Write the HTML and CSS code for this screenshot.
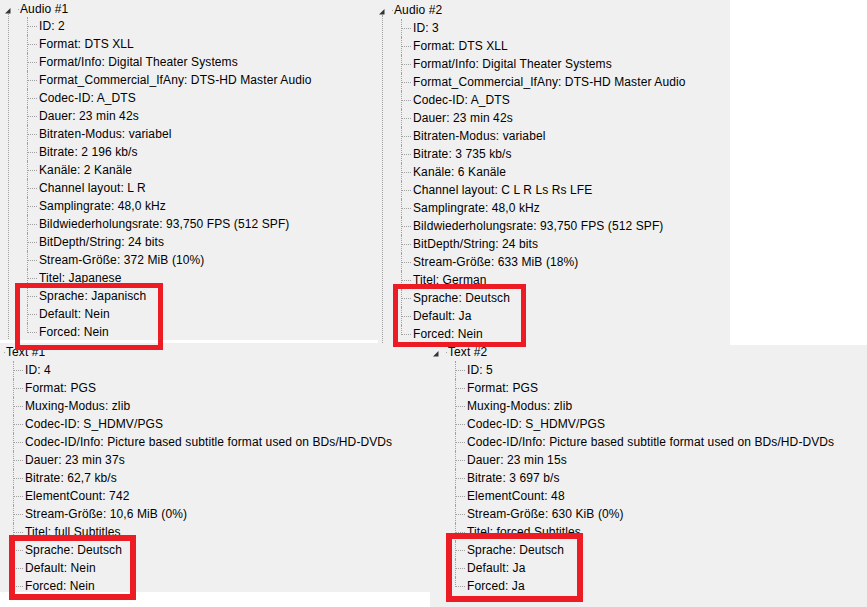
FILE: index.html
```html
<!DOCTYPE html>
<html lang="de">
<head>
    <meta charset="UTF-8">
    <meta name="viewport" content="width=device-width, initial-scale=1.0">
    <title>MediaInfo Baumansicht</title>

    <link rel="stylesheet" href="styles.css">
</head>
<body>
    <!-- Audio #1 -->
    <div class="shot shot-audio1">
        <div class="node">
            <div class="node-head">
                <svg class="expander" width="6" height="6" viewBox="0 0 6 6"><polygon points="5.5,0 5.5,5.5 0,5.5" fill="#333"/></svg>
                <span class="stub"></span>
                <span class="label">Audio #1</span>
            </div>
            <ul class="children">
                <li>ID: 2</li>
                <li>Format: DTS XLL</li>
                <li>Format/Info: Digital Theater Systems</li>
                <li>Format_Commercial_IfAny: DTS-HD Master Audio</li>
                <li>Codec-ID: A_DTS</li>
                <li>Dauer: 23 min 42s</li>
                <li>Bitraten-Modus: variabel</li>
                <li>Bitrate: 2 196 kb/s</li>
                <li>Kanäle: 2 Kanäle</li>
                <li>Channel layout: L R</li>
                <li>Samplingrate: 48,0 kHz</li>
                <li>Bildwiederholungsrate: 93,750 FPS (512 SPF)</li>
                <li>BitDepth/String: 24 bits</li>
                <li>Stream-Größe: 372 MiB (10%)</li>
                <li>Titel: Japanese</li>
                <li>Sprache: Japanisch</li>
                <li>Default: Nein</li>
                <li>Forced: Nein</li>
            </ul>
        </div>
    </div>

    <!-- Audio #2 -->
    <div class="shot shot-audio2">
        <div class="node">
            <div class="node-head">
                <svg class="expander" width="6" height="6" viewBox="0 0 6 6"><polygon points="5.5,0 5.5,5.5 0,5.5" fill="#333"/></svg>
                <span class="stub"></span>
                <span class="label">Audio #2</span>
            </div>
            <ul class="children">
                <li>ID: 3</li>
                <li>Format: DTS XLL</li>
                <li>Format/Info: Digital Theater Systems</li>
                <li>Format_Commercial_IfAny: DTS-HD Master Audio</li>
                <li>Codec-ID: A_DTS</li>
                <li>Dauer: 23 min 42s</li>
                <li>Bitraten-Modus: variabel</li>
                <li>Bitrate: 3 735 kb/s</li>
                <li>Kanäle: 6 Kanäle</li>
                <li>Channel layout: C L R Ls Rs LFE</li>
                <li>Samplingrate: 48,0 kHz</li>
                <li>Bildwiederholungsrate: 93,750 FPS (512 SPF)</li>
                <li>BitDepth/String: 24 bits</li>
                <li>Stream-Größe: 633 MiB (18%)</li>
                <li>Titel: German</li>
                <li>Sprache: Deutsch</li>
                <li>Default: Ja</li>
                <li>Forced: Nein</li>
            </ul>
        </div>
    </div>

    <!-- Text #1 -->
    <div class="shot shot-text1">
        <div class="node">
            <div class="node-head">
                <svg class="expander" width="6" height="6" viewBox="0 0 6 6"><polygon points="5.5,0 5.5,5.5 0,5.5" fill="#333"/></svg>
                <span class="stub"></span>
                <span class="label">Text #1</span>
            </div>
            <ul class="children">
                <li>ID: 4</li>
                <li>Format: PGS</li>
                <li>Muxing-Modus: zlib</li>
                <li>Codec-ID: S_HDMV/PGS</li>
                <li>Codec-ID/Info: Picture based subtitle format used on BDs/HD-DVDs</li>
                <li>Dauer: 23 min 37s</li>
                <li>Bitrate: 62,7 kb/s</li>
                <li>ElementCount: 742</li>
                <li>Stream-Größe: 10,6 MiB (0%)</li>
                <li>Titel: full Subtitles</li>
                <li>Sprache: Deutsch</li>
                <li>Default: Nein</li>
                <li>Forced: Nein</li>
            </ul>
        </div>
    </div>

    <!-- Text #2 -->
    <div class="shot shot-text2">
        <div class="node last">
            <div class="node-head">
                <svg class="expander" width="6" height="6" viewBox="0 0 6 6"><polygon points="5.5,0 5.5,5.5 0,5.5" fill="#333"/></svg>
                <span class="stub"></span>
                <span class="label">Text #2</span>
            </div>
            <ul class="children">
                <li>ID: 5</li>
                <li>Format: PGS</li>
                <li>Muxing-Modus: zlib</li>
                <li>Codec-ID: S_HDMV/PGS</li>
                <li>Codec-ID/Info: Picture based subtitle format used on BDs/HD-DVDs</li>
                <li>Dauer: 23 min 15s</li>
                <li>Bitrate: 3 697 b/s</li>
                <li>ElementCount: 48</li>
                <li>Stream-Größe: 630 KiB (0%)</li>
                <li>Titel: forced Subtitles</li>
                <li>Sprache: Deutsch</li>
                <li>Default: Ja</li>
                <li>Forced: Ja</li>
            </ul>
        </div>
    </div>

    <!-- red markings drawn over the screenshots -->
    <div class="mark mark-1"></div>
    <div class="mark mark-2"></div>
    <div class="mark mark-3"></div>
    <div class="mark mark-4"></div>
</body>
</html>
```

FILE: styles.css
```css
body{
    margin: 0;
    background-color: #fff;
    color: #000;
    font-family: "Liberation Sans", Arial, sans-serif;
    font-size: 12px;
    letter-spacing: 0.1px;
}

/* each screenshot crop */
.shot{
    position: absolute;
    background-color: #f0f0f0;
    overflow: hidden;
    box-sizing: border-box;
}
.shot-audio1{
    left: 0;
    top: 0;
    width: 378px;
    height: 340px;
    --x: 8px;
    --head: 17px;
}
.shot-audio1 .node-head{
    padding-top: 1px;
}
.shot-audio2{
    left: 378px;
    top: 0;
    width: 352px;
    height: 345px;
    padding-top: 1px;
    --x: 4px;
    --head: 18px;
}
.shot-text1{
    left: 0;
    top: 343px;
    width: 430px;
    height: 249px;
    --x: -6px;
    --head: 18px;
}
.shot-text2{
    left: 430px;
    top: 345px;
    width: 437px;
    height: 262px;
    --x: 6px;
    --head: 18px;
}
.shot-text2 .node{
    margin-top: -2px;
}

/* tree */
.node{
    position: relative;
}
.node::before{
    content: "";
    position: absolute;
    left: var(--x);
    top: 14px;
    bottom: 0;
    border-left: 1px dotted #a0a0a0;
}
.node.last::before{
    display: none;
}
.node-head{
    display: flex;
    align-items: center;
    box-sizing: border-box;
    height: var(--head);
    line-height: var(--head);
    margin-left: calc(var(--x) - 3px);
    white-space: nowrap;
}
.expander{
    display: block;
    flex: none;
    margin-top: 3px;
}
.stub{
    flex: none;
    width: 1px;
    height: 1px;
    background-color: #a0a0a0;
    margin: 0 1px 0 7px;
}
.children{
    list-style: none;
    margin: 0 0 0 calc(var(--x) + 19px);
    padding: 0;
}
.children li{
    position: relative;
    height: 18px;
    line-height: 18px;
    padding-left: 12px;
    white-space: nowrap;
}
.children li::before{
    content: "";
    position: absolute;
    left: 1px;
    top: 9px;
    width: 9px;
    border-top: 1px dotted #a0a0a0;
}
.children li::after{
    content: "";
    position: absolute;
    left: 0;
    top: 0;
    bottom: 0;
    border-left: 1px dotted #a0a0a0;
}
.children li:last-child::after{
    bottom: auto;
    height: 10px;
}

/* red highlight boxes */
.mark{
    position: absolute;
    border: 5px solid #ed1c24;
    box-sizing: border-box;
}
.mark-1{
    left: 15px;
    top: 283px;
    width: 148px;
    height: 67px;
}
.mark-2{
    left: 393px;
    top: 284px;
    width: 133px;
    height: 63px;
}
.mark-3{
    left: 9px;
    top: 535px;
    width: 127px;
    height: 65px;
    border-width: 6px;
}
.mark-4{
    left: 446px;
    top: 533px;
    width: 137px;
    height: 69px;
    border-width: 6px;
}
```
